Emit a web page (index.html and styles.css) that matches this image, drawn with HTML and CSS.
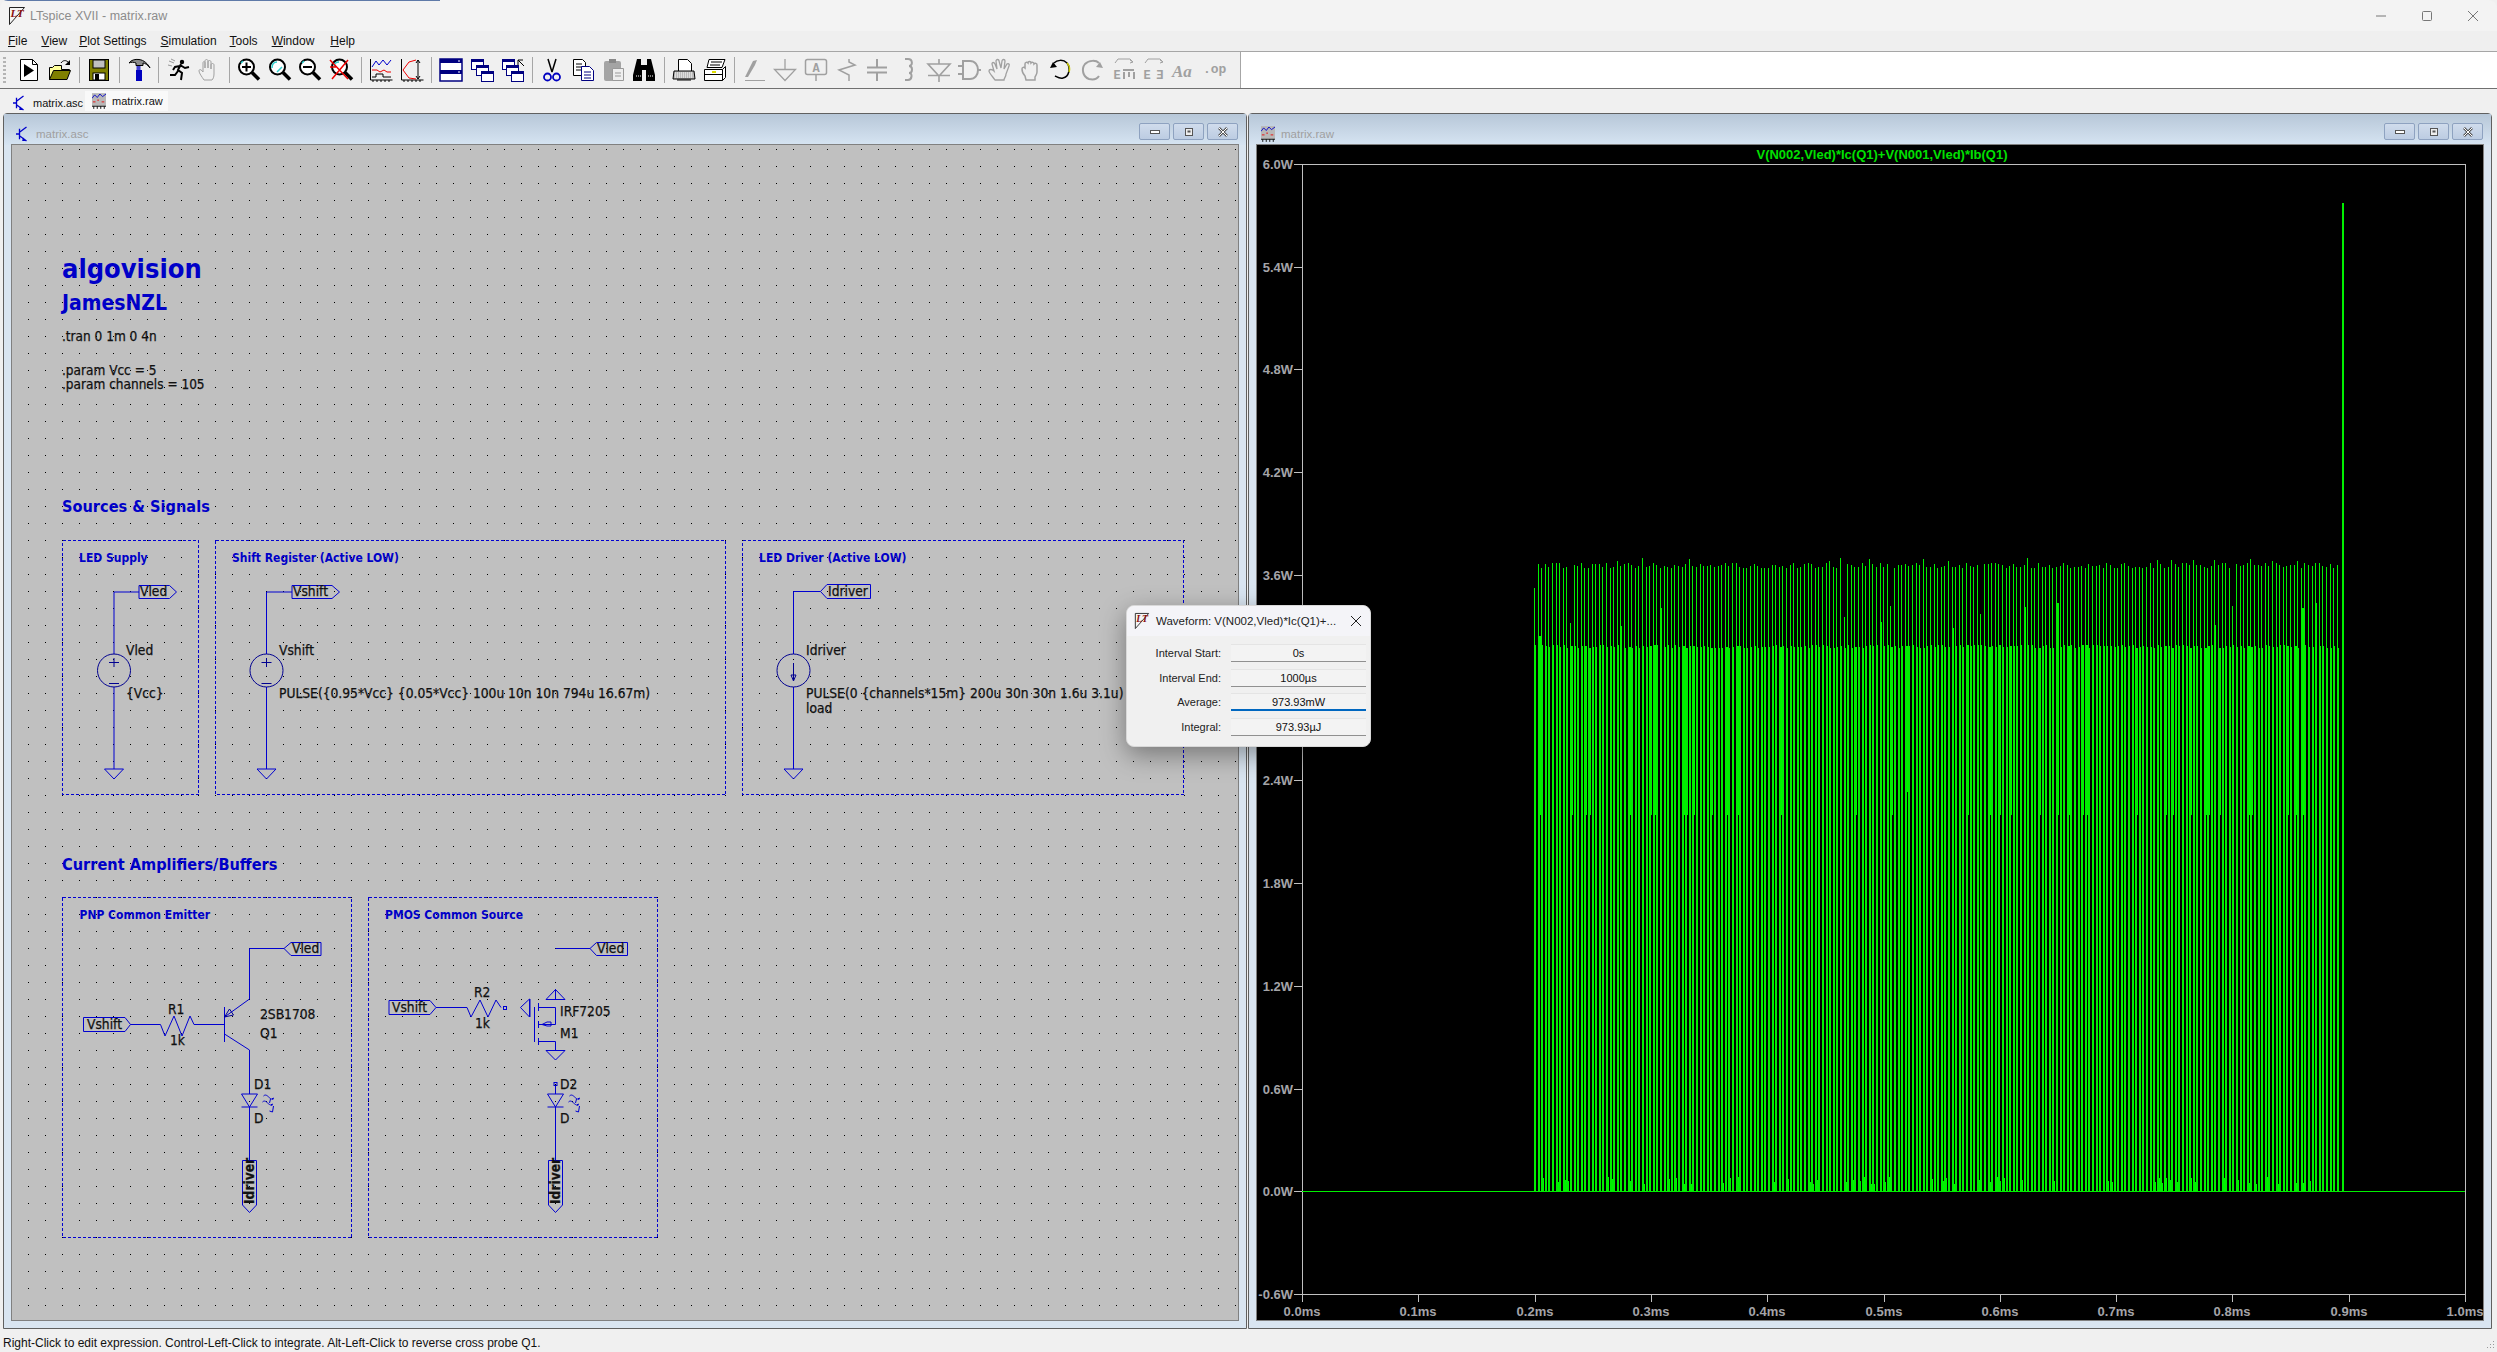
FILE: index.html
```html
<!DOCTYPE html>
<html lang="en">
<head>
    <meta charset="UTF-8">
    <title>LTspice XVII - matrix.raw</title>
    <link rel="stylesheet" href="styles.css">
</head>
<body>
<svg class="defs" width="0" height="0">
    <symbol id="sch-icon" viewBox="0 0 16 18">
        <path d="M4 3v12M0 9h4M4 7l8-6M4 11l8 6" fill="none" stroke="#00c" stroke-width="1.500"/>
        <path d="M8 13l4 4-5 0z" fill="#00c"/>
    </symbol>
    <symbol id="plot-icon" viewBox="0 0 16 18">
        <rect x="0" y="0" width="16" height="15" fill="#b8b8b8"/>
        <path d="M0 6l3-4 3 3 3-4 3 3 4-3" fill="none" stroke="#00c"/>
        <path d="M1 10h3M6 8h2M11 10h3" stroke="#e00"/>
        <path d="M0 15h16M2 15v3M6 15v3M10 15v3M14 15v3" stroke="#000"/>
    </symbol>
</svg>

<div class="app">
    <header class="titlebar">
        <svg class="title-logo" viewBox="0 0 18 20"><path d="M1.500 1.500h15L1.500 18.500z" fill="#f4f4f4" stroke="#222"/><text x="2.500" y="11" class="logo-text">LT</text></svg>
        <span class="title-text">LTspice XVII - matrix.raw</span>
        <div class="caption">
            <svg width="12" height="12"><path d="M1 6h10" stroke="#777"/></svg>
            <svg width="12" height="12"><rect x="1.500" y="1.500" width="9" height="9" rx="1" fill="none" stroke="#777"/></svg>
            <svg width="12" height="12"><path d="M1 1l10 10M11 1L1 11" stroke="#777"/></svg>
        </div>
    </header>

    <nav class="menubar">
        <span><u>F</u>ile</span>
        <span><u>V</u>iew</span>
        <span><u>P</u>lot Settings</span>
        <span><u>S</u>imulation</span>
        <span><u>T</u>ools</span>
        <span><u>W</u>indow</span>
        <span><u>H</u>elp</span>
    </nav>

    <div class="toolrow">
        <div class="toolbar">
            <i class="grip"></i>
            <b class="tool"><svg viewBox="0 0 24 24"><path d="M3.500 1.500h12l5 5v16h-17z" fill="#fff" stroke="#000"/><path d="M15.500 1.500v5h5" fill="none" stroke="#000"/><path d="M7 6l10 6.500L7 19z"/></svg></b>
            <b class="tool"><svg viewBox="0 0 24 24"><path d="M1.500 21.500V9.500h3l2-2h7v4h8l-3 10z" fill="#ffff9c" stroke="#000"/><path d="M1.500 21.500l4-9h17l-3.500 9z" fill="#808000" stroke="#000"/><path d="M13 5c2-3 5-3 7-1" fill="none" stroke="#000"/><path d="M22 2v5h-5" fill="#000"/></svg></b>
            <i class="sep"></i>
            <b class="tool"><svg viewBox="0 0 24 24"><rect x="2.500" y="1.500" width="19" height="21" fill="#808000" stroke="#000"/><rect x="6" y="2" width="12" height="8" fill="#c0c0c0" stroke="#000"/><rect x="6" y="15" width="12" height="7" fill="#fff" stroke="#000"/><rect x="8" y="16" width="4" height="6"/></svg></b>
            <i class="sep"></i>
            <b class="tool"><svg viewBox="0 0 24 24"><path d="M9 7.500h7v-2.500c2 0 5 2 7 5-2-4-6-8-11-8.500C8 1 4 2 2 5c2-1 5-1 7 0z" fill="#8c8c8c" stroke="#000"/><rect x="9.500" y="8" width="4" height="4" fill="#4040d0"/><rect x="9" y="12" width="6" height="11" fill="#0000c0"/></svg></b>
            <i class="sep"></i>
            <b class="tool"><svg viewBox="0 0 24 24"><circle cx="15" cy="4" r="2.200"/><path d="M14 6l-3 6 4 3-1 7M13 8l-5 1-2 3M13 7l5 3 4-1M11 13l-3 4H3" fill="none" stroke="#000" stroke-width="2"/><path d="M2 3l5 2M1 7l4 1M4 1l4 2" stroke="#999"/></svg></b>
            <b class="tool"><svg viewBox="0 0 24 24"><path d="M7 22c-2-3-5-7-5-9s2-2 4 1V5c0-2 2-2 2 0v5-7c0-2 3-2 3 0v7-6c0-2 3-2 3 0v7-4c0-2 3-2 3 0v9c0 3-1 5-2 6z" fill="#f0f0f0" stroke="#a0a0a0"/></svg></b>
            <i class="sep"></i>
            <b class="tool"><svg viewBox="0 0 24 24"><circle cx="9.500" cy="9" r="7.500" fill="#fff" stroke="#000" stroke-width="2"/><path d="M15 14.500l7 7" stroke="#000" stroke-width="3.500"/><path d="M5 9h9M9.500 4.500v9" stroke="#000" stroke-width="2"/><path d="M4 5l2-2" stroke="#2cc" stroke-width="1.500"/></svg></b>
            <b class="tool"><svg viewBox="0 0 24 24"><circle cx="9.500" cy="9" r="7.500" fill="#fff" stroke="#000" stroke-width="2"/><path d="M15 14.500l7 7" stroke="#000" stroke-width="3.500"/><path d="M4 10c0-4 2-6 5-6M9 14l5-5" fill="none" stroke="#3cc" stroke-width="1.500"/></svg></b>
            <b class="tool"><svg viewBox="0 0 24 24"><circle cx="9.500" cy="9" r="7.500" fill="#fff" stroke="#000" stroke-width="2"/><path d="M15 14.500l7 7" stroke="#000" stroke-width="3.500"/><path d="M5 9h9" stroke="#000" stroke-width="2"/><path d="M4 5l2-2" stroke="#2cc" stroke-width="1.500"/></svg></b>
            <b class="tool"><svg viewBox="0 0 24 24"><circle cx="10.500" cy="9" r="7.500" fill="#fff" stroke="#000" stroke-width="2"/><path d="M16 14.500l7 7" stroke="#000" stroke-width="3.500"/><path d="M5 9c0-3 2-5 5-5" fill="none" stroke="#3cc" stroke-width="1.500"/><path d="M1 2l18 19M19 2L3 21M1 9h6" stroke="#e00" stroke-width="1.500"/></svg></b>
            <i class="sep"></i>
            <b class="tool"><svg viewBox="0 0 24 24"><path d="M1.500 1v21h22M4 22v2M8 22v2M12 22v2M16 22v2M20 22v2" fill="none" stroke="#000"/><path d="M3 9l4-6 3 4 4-5 4 5 4-5" fill="none" stroke="#00c"/><path d="M3 12h5l3 2 4-2 3 2h4" fill="none" stroke="#e00"/><path d="M3 19h4v-3h7v3h8" fill="none" stroke="#000"/></svg></b>
            <b class="tool"><svg viewBox="0 0 24 24"><path d="M1.500 1v21h22M4 22v2M8 22v2M12 22v2M16 22v2M20 22v2" fill="none" stroke="#000"/><path d="M3 12l6-8 7-2M3 12l6 8 7 1" fill="none" stroke="#e00"/><path d="M18 2v19M16 5l2-3 2 3M16 18l2 3 2-3" fill="none" stroke="#000"/></svg></b>
            <i class="sep"></i>
            <b class="tool"><svg viewBox="0 0 24 24"><rect x="1" y="1" width="22" height="22" fill="#fff" stroke="#000080" stroke-width="1.500"/><rect x="1" y="1" width="22" height="4" fill="#000080"/><rect x="1" y="12" width="22" height="4" fill="#000080"/><path d="M19 3h2M19 14h2" stroke="#fff"/></svg></b>
            <b class="tool"><svg viewBox="0 0 24 24"><rect x="1.500" y="1.500" width="12" height="10" fill="#fff" stroke="#000080"/><rect x="1" y="1" width="13" height="3" fill="#000080"/><rect x="6.500" y="7.500" width="12" height="10" fill="#fff" stroke="#000080"/><rect x="6" y="7" width="13" height="3" fill="#000080"/><rect x="11.500" y="13.500" width="12" height="10" fill="#fff" stroke="#000080"/><rect x="11" y="13" width="13" height="3" fill="#000080"/></svg></b>
            <b class="tool"><svg viewBox="0 0 24 24"><rect x="1.500" y="1.500" width="12" height="10" fill="#fff" stroke="#000080"/><rect x="1" y="1" width="13" height="3" fill="#000080"/><rect x="5.500" y="7.500" width="12" height="10" fill="#fff" stroke="#000080"/><rect x="5" y="7" width="13" height="3" fill="#000080"/><rect x="10.500" y="13.500" width="12" height="10" fill="#fff" stroke="#000080"/><rect x="10" y="13" width="13" height="3" fill="#000080"/><path d="M17 2h5M17 2v5M23 8l-6-6" stroke="#000" fill="none"/></svg></b>
            <i class="sep"></i>
            <b class="tool"><svg viewBox="0 0 24 24"><path d="M8 1l4 13M16 1l-4 13" stroke="#000" stroke-width="1.500"/><circle cx="7.500" cy="19" r="3.500" fill="none" stroke="#0000c0" stroke-width="1.800"/><circle cx="16.500" cy="19" r="3.500" fill="none" stroke="#0000c0" stroke-width="1.800"/></svg></b>
            <b class="tool"><svg viewBox="0 0 24 24"><path d="M2.500 1.500h9l3 3v13h-12z" fill="#fff" stroke="#000"/><path d="M5 6h6M5 9h7M5 12h7" stroke="#000"/><path d="M10.500 8.500h8l4 4v10h-12z" fill="#fff" stroke="#000080"/><path d="M13 14h7M13 17h7M13 20h7" stroke="#000080"/></svg></b>
            <b class="tool"><svg viewBox="0 0 24 24"><rect x="2" y="3" width="17" height="20" rx="2" fill="#a4a4a4"/><rect x="7" y="1" width="7" height="4" fill="#888"/><path d="M10.500 10.500h11v12h-11z" fill="#eee" stroke="#999"/><path d="M13 15h6M13 18h6" stroke="#999"/></svg></b>
            <b class="tool"><svg viewBox="0 0 24 24"><path d="M5 1h4v6h6V1h4l4 16v6h-9V12h-4v11H1v-6z"/><path d="M4 18h5M16 18h5" stroke="#fff" stroke-dasharray="1 1"/></svg></b>
            <i class="sep"></i>
            <b class="tool"><svg viewBox="0 0 24 24"><path d="M6.500 1.500h9l4 4v8h-13z" fill="#fff" stroke="#000"/><path d="M2 13h20l1 8H1z" fill="#bbb" stroke="#000"/><path d="M3 15h18M3 17h18M3 19h18" stroke="#fff" stroke-dasharray="1 1"/><path d="M5 22h14" stroke="#000"/></svg></b>
            <b class="tool"><svg viewBox="0 0 24 24"><path d="M6 1.500h16l-3 8H4z" fill="#fff" stroke="#000"/><path d="M8 4h11M7 7h10" stroke="#000"/><path d="M1.500 11.500h18l3-3v11l-3 3h-18z" fill="#fff" stroke="#000"/><path d="M1.500 16.500h18M19.500 11.500v11" stroke="#000"/><path d="M9 14h4" stroke="#dd0" stroke-width="2"/></svg></b>
            <i class="sep"></i>
            <b class="tool off"><svg viewBox="0 0 24 24"><path d="M3 19L11 3l4-1-2 5-7 12z" fill="#a0a0a0"/><path d="M3 22.500h20" stroke="#a0a0a0"/></svg></b>
            <b class="tool off"><svg viewBox="0 0 24 24"><path d="M12 1v10M1.500 11.500h21L12 22.500z" fill="none" stroke="#a0a0a0" stroke-width="1.300"/></svg></b>
            <b class="tool off"><svg viewBox="0 0 24 24"><rect x="1.500" y="1.500" width="21" height="15" rx="2" fill="none" stroke="#a0a0a0" stroke-width="1.500"/><path d="M12 17v6" stroke="#a0a0a0" stroke-width="1.500"/><text x="12" y="13.500" class="ico-text">A</text></svg></b>
            <b class="tool off"><svg viewBox="0 0 24 24"><path d="M15 1v3l6 3-16 5 10 5v6" fill="none" stroke="#a0a0a0" stroke-width="1.500"/></svg></b>
            <b class="tool off"><svg viewBox="0 0 24 24"><path d="M12 1v8M2 9.500h20M2 14.500h20M12 15v8" fill="none" stroke="#a0a0a0" stroke-width="2"/></svg></b>
            <b class="tool off"><svg viewBox="0 0 24 24"><path d="M9 1h3c5 0 5 7 1 7 4 0 4 7 0 7 4 0 3 7-1 7H9" fill="none" stroke="#a0a0a0" stroke-width="2"/></svg></b>
            <b class="tool off"><svg viewBox="0 0 24 24"><path d="M12 1v5M12 18v6M1 6h22L12 18 1 6zM1 17.500h22" fill="none" stroke="#a0a0a0" stroke-width="1.600"/></svg></b>
            <b class="tool off"><svg viewBox="0 0 24 24"><path d="M6 3h7c5 0 8 4 8 9s-3 9-8 9H6zM1 8h5M1 16h5M21 12h3" fill="none" stroke="#a0a0a0" stroke-width="2"/></svg></b>
            <b class="tool off"><svg viewBox="0 0 24 24"><path d="M7 22c-2-3-6-7-6-9s3-2 5 0l-2-7c0-2 2-2 3 0l2 5-1-8c0-2 3-2 3 0l2 7 1-7c0-2 3-2 3 0l-1 8 3-5c1-1 3 0 2 2l-3 8c0 3-2 4-2 6z" fill="none" stroke="#a0a0a0" stroke-width="1.300"/></svg></b>
            <b class="tool off"><svg viewBox="0 0 24 24"><path d="M7 22l-1-4c-2-2-3-5-3-7s2-2 3-1V6c0-2 2-2 3-1 0-2 3-2 3 0 1-1 3-1 3 1 1-1 3-1 3 1v7c0 2-1 3-2 5v3z" fill="none" stroke="#a0a0a0" stroke-width="1.500"/></svg></b>
            <b class="tool"><svg viewBox="0 0 24 24"><path d="M5 5c3-3 9-4 13 0 4 5 2 14-4 15-3 1-6-1-8-2" fill="none" stroke="#000" stroke-width="1.500"/><path d="M18 5c3 3 3 7 2 9" fill="none" stroke="#cc0" stroke-width="1.500"/><path d="M1 10l7-1-4-5z"/></svg></b>
            <b class="tool off"><svg viewBox="0 0 24 24"><path d="M19 5C16 2 9 2 5 6c-4 5-2 13 4 15 4 1 8 0 10-3" fill="none" stroke="#a0a0a0" stroke-width="2"/><path d="M23 10l-7-1 4-5z" fill="#a0a0a0"/></svg></b>
            <b class="tool off"><svg viewBox="0 0 24 24"><path d="M4 5l3-4h12l3 3M19 2l3 2-3 1" fill="none" stroke="#a0a0a0"/><text x="6" y="21" class="ico-text">E</text><path d="M12 12h11M13 14v7M18 14v5M23 14v7" stroke="#a0a0a0" stroke-width="2" fill="none"/></svg></b>
            <b class="tool off"><svg viewBox="0 0 24 24"><path d="M4 5l3-4h12l3 3M19 2l3 2-3 1" fill="none" stroke="#a0a0a0"/><text x="6" y="21" class="ico-text">E</text><text x="19" y="21" class="ico-text flip">E</text></svg></b>
            <b class="tool off"><svg viewBox="0 0 24 24"><text x="0" y="19" class="ico-aa">Aa</text></svg></b>
            <b class="tool off"><svg viewBox="0 0 24 24"><text x="0" y="15" class="ico-op">.op</text></svg></b>
        </div>
        <div class="toolrest"></div>
    </div>

    <div class="tabs">
        <span class="tab"><svg class="tab-ico"><use href="#sch-icon"/></svg>matrix.asc</span>
        <span class="tab active"><svg class="tab-ico"><use href="#plot-icon"/></svg>matrix.raw</span>
    </div>

    <main class="mdi">
        <section class="window">
            <div class="win-title">
                <svg class="win-ico"><use href="#sch-icon"/></svg>
                <span class="win-name">matrix.asc</span>
                <div class="win-btns">
                    <span class="win-btn"><svg width="12" height="8"><rect x="1.500" y="2.500" width="9" height="3" fill="#fff" stroke="#555"/></svg></span>
                    <span class="win-btn"><svg width="10" height="10"><rect x="1.500" y="1.500" width="7" height="7" fill="#eee" stroke="#555"/><rect x="3.500" y="3.500" width="3" height="2" fill="#555"/></svg></span>
                    <span class="win-btn"><svg width="12" height="10"><path d="M2 1l8 8M10 1L2 9" stroke="#555" stroke-width="2.500"/><path d="M2 1l8 8M10 1L2 9" stroke="#fff"/></svg></span>
                </div>
            </div>
            <div class="canvas">
                <svg class="schematic" viewBox="12 145 1226 1175" width="1226" height="1175">
                    <defs>
                        <pattern id="grid" patternUnits="userSpaceOnUse" x="11" y="13" width="17" height="17">
                            <rect width="1" height="1" fill="#000"/>
                        </pattern>
                        <g id="gnd"><path d="M-9.500 0h19L0 10z"/></g>
                        <g id="led">
                            <path d="M-8 0h16L0 13zM-8 13H8"/>
                            <path d="M14 2c3-3 5 2 8 3l2-1-1 2M13 8c3-3 5 2 8 3l2-1-1 2M21 5l-1 4M24 12l-1 6-3-1"/>
                        </g>
                        <g id="idriver-flag">
                            <path d="M-7 0v44.500L0 52 7 44.500V0z"/>
                        </g>
                    </defs>
                    <rect x="12" y="145" width="1226" height="1175" fill="url(#grid)" class="dots"/>

                    <text x="62" y="278" class="h-big">algovision</text>
                    <text x="62" y="310" class="h-mid">JamesNZL</text>
                    <text x="62" y="341" class="note">.tran 0 1m 0 4n</text>
                    <text x="62" y="375" class="note">.param Vcc = 5</text>
                    <text x="62" y="389" class="note">.param channels = 105</text>
                    <text x="62" y="512" class="h-sec">Sources &amp; Signals</text>
                    <text x="62" y="870" class="h-sec">Current Amplifiers/Buffers</text>

                    <g class="dash">
                        <rect x="62.500" y="540.500" width="136" height="254"/>
                        <rect x="215.500" y="540.500" width="510" height="254"/>
                        <rect x="742.500" y="540.500" width="441" height="254"/>
                        <rect x="62.500" y="897.500" width="289" height="340"/>
                        <rect x="368.500" y="897.500" width="289" height="340"/>
                    </g>
                    <text x="79" y="562" class="h-box">LED Supply</text>
                    <text x="232" y="562" class="h-box">Shift Register (Active LOW)</text>
                    <text x="759" y="562" class="h-box">LED Driver (Active LOW)</text>
                    <text x="79.500" y="919" class="h-box">PNP Common Emitter</text>
                    <text x="385" y="919" class="h-box">PMOS Common Source</text>

                    <g class="wire">
                        <!-- LED supply -->
                        <path d="M139 592H114V654M114 687V769"/>
                        <path d="M139 585.500H169.500L176.500 592 169.500 598.500H139z"/>
                        <circle cx="114" cy="670.500" r="16.500" class="sym"/>
                        <path d="M109 662.500h10M114 658v9M109 683.500h10" class="sym"/>
                        <use href="#gnd" x="114" y="769"/>
                        <!-- Shift register -->
                        <path d="M292 592H266.500V654M266.500 687V769"/>
                        <path d="M292 585.500H332L339.500 592 332 598.500H292z"/>
                        <circle cx="266.500" cy="670.500" r="16.500" class="sym"/>
                        <path d="M261.500 662.500h10M266.500 658v9M261.500 683.500h10" class="sym"/>
                        <use href="#gnd" x="266.500" y="769"/>
                        <!-- LED driver -->
                        <path d="M820.500 591.500H793.500V654M793.500 687V769"/>
                        <path d="M820.500 591.500L827 584.500H870.500V598.500H827z"/>
                        <circle cx="793.500" cy="670.500" r="16.500" class="sym"/>
                        <path d="M793.500 663v17M791 675l2.500 6 2.500-6z" class="sym"/>
                        <use href="#gnd" x="793.500" y="769"/>
                        <!-- PNP stage -->
                        <path d="M249.500 999V948.500H284M284 948.500L291 942.500H321V955.500H291z"/>
                        <path d="M83.500 1017.500H125L130.500 1024.500 125 1031.500H83.500zM130.500 1024.500H160.500L165 1036 174 1016 182 1036 190 1016 194 1024.500H224"/>
                        <path d="M224.500 1007V1042M224.500 1017L249.500 999M224.500 1034L249.500 1050V1094"/>
                        <path d="M224.500 1017l5-8 4 6z" class="sym"/>
                        <use href="#led" x="249.500" y="1094"/>
                        <path d="M249.500 1107V1160.500"/>
                        <use href="#idriver-flag" x="249.500" y="1160.500"/>
                        <!-- PMOS stage -->
                        <path d="M389 1000.500H430L436 1007.500 430 1014.500H389zM436 1007.500H467L471 1017 480 1000 488 1017 496 1000 501 1007.500"/>
                        <rect x="503.500" y="1006.500" width="3" height="3"/>
                        <path d="M520.500 1007.500l9-8.500v18zM530 999V1017M534.500 1007V1042M538.500 1003V1011M538.500 1021V1028M538.500 1038V1045M538.500 1007.500H555.500V1024.500H538.500M538.500 1041.500H555.500V1050M555.500 989V999"/>
                        <path d="M546 999.500h19L555.500 989.500zM546 1050.500h19L555.500 1060z"/>
                        <path d="M542 1024.500l5-2.500h4v4h-4z"/>
                        <path d="M555.500 948.500H590L596.500 942.500H627.500V955.500H596.500L590 948.500"/>
                        <rect x="554" y="1082.500" width="3" height="3"/>
                        <path d="M555.500 1086V1094"/>
                        <use href="#led" x="555.500" y="1094"/>
                        <path d="M555.500 1107V1160.500"/>
                        <use href="#idriver-flag" x="555.500" y="1160.500"/>
                    </g>

                    <g class="lbl">
                        <text x="140" y="596">Vled</text>
                        <text x="293" y="596">Vshift</text>
                        <text x="828" y="596">Idriver</text>
                        <text x="126" y="655">Vled</text>
                        <text x="126" y="698">{Vcc}</text>
                        <text x="279" y="655">Vshift</text>
                        <text x="279" y="698">PULSE({0.95*Vcc} {0.05*Vcc} 100u 10n 10n 794u 16.67m)</text>
                        <text x="806" y="655">Idriver</text>
                        <text x="806" y="698">PULSE(0 {channels*15m} 200u 30n 30n 1.6u 3.1u)</text>
                        <text x="806" y="713">load</text>
                        <text x="292" y="953">Vled</text>
                        <text x="87" y="1029">Vshift</text>
                        <text x="168" y="1014">R1</text>
                        <text x="170" y="1045">1k</text>
                        <text x="260" y="1019">2SB1708</text>
                        <text x="260" y="1038">Q1</text>
                        <text x="254" y="1089">D1</text>
                        <text x="254" y="1123">D</text>
                        <text x="392" y="1012">Vshift</text>
                        <text x="474" y="997">R2</text>
                        <text x="475" y="1028">1k</text>
                        <text x="560" y="1016">IRF7205</text>
                        <text x="560" y="1038">M1</text>
                        <text x="597" y="953">Vled</text>
                        <text x="560" y="1089">D2</text>
                        <text x="560" y="1123">D</text>
                        <text transform="translate(254 1204) rotate(-90)" class="lbl-bold">Idriver</text>
                        <text transform="translate(560 1204) rotate(-90)" class="lbl-bold">Idriver</text>
                    </g>
                </svg>
            </div>
        </section>

        <section class="window">
            <div class="win-title">
                <svg class="win-ico"><use href="#plot-icon"/></svg>
                <span class="win-name">matrix.raw</span>
                <div class="win-btns">
                    <span class="win-btn"><svg width="12" height="8"><rect x="1.500" y="2.500" width="9" height="3" fill="#fff" stroke="#555"/></svg></span>
                    <span class="win-btn"><svg width="10" height="10"><rect x="1.500" y="1.500" width="7" height="7" fill="#eee" stroke="#555"/><rect x="3.500" y="3.500" width="3" height="2" fill="#555"/></svg></span>
                    <span class="win-btn"><svg width="12" height="10"><path d="M2 1l8 8M10 1L2 9" stroke="#555" stroke-width="2.500"/><path d="M2 1l8 8M10 1L2 9" stroke="#fff"/></svg></span>
                </div>
            </div>
            <div class="canvas plot">
                <svg id="plot" viewBox="1257 145 1226 1175" width="1226" height="1175">
                    <text x="1882" y="159" class="trace-name">V(N002,Vled)*Ic(Q1)+V(N001,Vled)*Ib(Q1)</text>
                    <g id="axes"></g>
                    <g id="trace"></g>
                </svg>
            </div>
        </section>

        <aside class="dialog">
            <div class="dlg-title">
                <svg class="dlg-logo" viewBox="0 0 18 20"><path d="M1.500 1.500h15L1.500 18.500z" fill="#f4f4f4" stroke="#222"/><text x="2.500" y="11" class="logo-text">LT</text></svg>
                <span>Waveform: V(N002,Vled)*Ic(Q1)+...</span>
                <svg class="dlg-close" width="12" height="12"><path d="M1 1l10 10M11 1L1 11" stroke="#222"/></svg>
            </div>
            <div class="dlg-row"><label>Interval Start:</label><output>0s</output></div>
            <div class="dlg-row"><label>Interval End:</label><output>1000µs</output></div>
            <div class="dlg-row"><label>Average:</label><output class="focus">973.93mW</output></div>
            <div class="dlg-row"><label>Integral:</label><output>973.93µJ</output></div>
        </aside>
    </main>

    <footer class="status">
        <span>Right-Click to edit expression. Control-Left-Click to integrate. Alt-Left-Click to reverse cross probe Q1.</span>
        <svg class="size-grip" width="12" height="12"><path d="M10 2h1v1h-1zM7 5h1v1H7zM10 5h1v1h-1zM4 8h1v1H4zM7 8h1v1H7zM10 8h1v1h-1z" fill="#999"/></svg>
    </footer>
</div>
<script src="plot.js"></script>
</body>
</html>
```

FILE: styles.css
```css
* { box-sizing: border-box; }
html, body { margin: 0; height: 100%; overflow: hidden; }
body {
    font-family: "Liberation Sans", Arial, sans-serif;
    font-size: 12px;
    color: #111;
    background: #f0f0f0;
}
.defs { position: absolute; }
.app { display: flex; flex-direction: column; height: 100vh; }

/* window frame */
.titlebar {
    height: 31px;
    display: flex;
    align-items: center;
    padding-left: 8px;
    background: linear-gradient(#5f7aa8, #5f7aa8) 0 0 / 440px 1px no-repeat, #f3f3f3;
    border-radius: 8px 8px 0 0;
}
.title-logo { width: 18px; height: 20px; }
.title-text { margin-left: 4px; color: #8c8c8c; font-size: 12.5px; }
.caption { margin-left: auto; display: flex; gap: 34px; padding-right: 18px; }
.logo-text { font: italic bold 11px "Liberation Serif", serif; fill: #8a1010; }

.menubar {
    height: 21px;
    display: flex;
    align-items: center;
    padding-left: 8px;
    gap: 9px;
    background: #efefef;
    border-bottom: 1px solid #a6a6a6;
    font-size: 12px;
}
.menubar span:nth-child(2) { margin-left: 5px; }
.menubar span:nth-child(3) { margin-left: 3px; }
.menubar span:nth-child(4) { margin-left: 5px; }
.menubar span:nth-child(5) { margin-left: 4px; }
.menubar span:nth-child(6) { margin-left: 5px; }
.menubar span:nth-child(7) { margin-left: 7px; }

/* toolbar */
.toolrow { height: 37px; display: flex; border-bottom: 1px solid #707070; }
.toolbar {
    width: 1241px;
    display: flex;
    align-items: center;
    padding-left: 3px;
    background: #f0f0f0;
    border-right: 1px solid #a6a6a6;
}
.toolrest { flex: 1; background: #fff; }
.grip {
    width: 3px;
    height: 26px;
    margin-right: 7.650px;
    background: repeating-linear-gradient(#b4b4b4 0 2px, transparent 2px 4px);
}
.tool { width: 30.700px; height: 36px; display: flex; align-items: center; justify-content: center; }
.tool svg { width: 24px; height: 24px; overflow: visible; }
.sep { width: 1px; height: 26px; margin: 0 4px; background: #a6a6a6; }
.ico-text { font: bold 12px "Liberation Mono", monospace; fill: #a0a0a0; text-anchor: middle; }
.ico-text.flip { transform-box: fill-box; transform-origin: center; transform: scaleX(-1); }
.ico-aa { font: italic bold 17px "Liberation Serif", serif; fill: #a0a0a0; }
.ico-op { font: bold 13px "Liberation Mono", monospace; fill: #a0a0a0; }

/* tabs */
.tabs { height: 24px; display: flex; align-items: flex-start; padding: 2px 0 0 5px; background: #f0f0f0; }
.tab {
    height: 20px;
    width: 80px;
    display: flex;
    align-items: center;
    gap: 6px;
    padding: 3px 0 0 8px;
    font-size: 11px;
}
.tab.active { background: #f9f9f9; padding: 0 0 0 7px; width: 83px; }
.tab-ico { width: 14px; height: 16px; flex: none; }

/* child windows */
.mdi { flex: 1; display: flex; gap: 1px; padding: 0 5px 1px 3px; position: relative; min-height: 0; }
.window {
    width: 1244px;
    display: flex;
    flex-direction: column;
    padding: 0 8px 8px;
    background: #d9e5f1;
    border: 1px solid #606060;
    border-radius: 4px 4px 0 0;
}
.win-title {
    height: 31px;
    margin: 0 -8px;
    padding: 0 8px 0 12px;
    display: flex;
    align-items: center;
    background: linear-gradient(#b7c7d8, #d6e4f2);
}
.win-ico { width: 14px; height: 16px; margin-top: 8px; }
.win-name { margin: 8px 0 0 6px; color: #a0a0a0; font-size: 11.500px; }
.win-btns { margin-left: auto; display: flex; gap: 3px; margin-top: 4px; }
.win-btn {
    width: 31px;
    height: 17px;
    display: flex;
    align-items: center;
    justify-content: center;
    border: 1px solid #8ea2c0;
    border-radius: 2px;
    background: linear-gradient(#d0dcec, #bccce2);
}
.canvas { width: 1226px; height: 1175px; background: #c0c0c0; outline: 1px solid #808080; }
.canvas svg { display: block; }
.plot { background: #000; }

/* schematic */
.dots { shape-rendering: crispEdges; }
.dash rect { fill: none; stroke: #0000d0; stroke-dasharray: 3 2; shape-rendering: crispEdges; }
.wire path, .wire rect, .wire circle, .wire use { fill: none; stroke: #0000d0; stroke-width: 1; }
.wire .sym { stroke: #000090; }
.h-big, .h-mid, .h-sec, .h-box, .note, .lbl text {
    font-family: "DejaVu Sans Condensed", "DejaVu Sans", sans-serif;
    font-stretch: condensed;
}
.h-big { font-size: 27px; font-weight: bold; fill: #0000c8; }
.h-mid { font-size: 21px; font-weight: bold; fill: #0000c8; }
.h-sec { font-size: 16.200px; font-weight: bold; fill: #0000c8; }
.h-box { font-size: 12px; font-weight: bold; fill: #0000c8; }
.note, .lbl text { font-size: 13.500px; fill: #111; stroke: #111; stroke-width: .25px; }
.lbl text { font-size: 13.700px; }
.lbl .lbl-bold { font-weight: bold; }

/* plot */
.trace-name { font: bold 13px "Liberation Sans", sans-serif; fill: #00e000; text-anchor: middle; }
.axis-line { stroke: #c0c0c0; fill: none; shape-rendering: crispEdges; }
.axis-y, .axis-x { font: bold 13px "Liberation Sans", sans-serif; fill: #a4a4a8; }
.axis-y { text-anchor: end; }
.axis-x { text-anchor: middle; }
.trace-bar { fill: #00f000; shape-rendering: crispEdges; }

/* measurement dialog */
.dialog {
    position: absolute;
    left: 1126px;
    top: 492px;
    width: 245px;
    height: 142px;
    background: #f0f0f0;
    border: 1px solid #d8d8d8;
    border-radius: 8px;
    box-shadow: 0 8px 26px rgba(0, 0, 0, .38);
    overflow: hidden;
    font-size: 11px;
}
.dlg-title {
    height: 30px;
    display: flex;
    align-items: center;
    padding-left: 7px;
    background: #f4f4f8;
    font-size: 11.5px;
    color: #222;
    margin-bottom: 8px;
}
.dlg-logo { width: 16px; height: 18px; margin-right: 6px; flex: none; }
.dlg-close { margin-left: auto; margin-right: 8px; }
.dlg-row { display: flex; align-items: center; height: 18px; margin-bottom: 6.500px; }
.dlg-row label { width: 94px; text-align: right; color: #222; }
.dlg-row output {
    width: 135px;
    height: 18px;
    margin-left: 10px;
    line-height: 17px;
    text-align: center;
    background: #f3f3f3;
    border-top: 1px solid #e4e4e4;
    border-bottom: 1px solid #909090;
}
.dlg-row output.focus { border-bottom: 2px solid #0067c0; }

/* status bar */
.status {
    height: 22px;
    display: flex;
    padding: 6px 0 0 3px;
    background: #f0f0f0;
    font-size: 12px;
    line-height: 14px;
    white-space: nowrap;
}
.size-grip { margin: 3px 2px 0 auto; }
```

FILE: plot.js
```js
// draws the axes and the waveform of the plot pane
var NS = 'http://www.w3.org/2000/svg';
var axes = document.getElementById('axes');
var trace = document.getElementById('trace');

var LEFT = 1302, RIGHT = 2465, TOP = 164, BOTTOM = 1294, ZERO = 1191;

function el(parent, tag, attrs, txt) {
    var e = document.createElementNS(NS, tag);
    for (var k in attrs) e.setAttribute(k, attrs[k]);
    if (txt) e.textContent = txt;
    parent.appendChild(e);
    return e;
}

function bar(x, y0, y1, w) {
    el(trace, 'rect', { x: x, y: y0, width: w, height: y1 - y0, 'class': 'trace-bar' });
}

// frame
el(axes, 'rect', { x: LEFT + .5, y: TOP + .5, width: RIGHT - LEFT, height: BOTTOM - TOP, 'class': 'axis-line' });

// y ticks, 6.0W down to -0.6W
for (var i = 0; i <= 11; i++) {
    var y = Math.round(TOP + i * (BOTTOM - TOP) / 11);
    var v = (6 - i * .6).toFixed(1);
    el(axes, 'path', { d: 'M' + (LEFT - 8) + ' ' + (y + .5) + 'H' + LEFT, 'class': 'axis-line' });
    el(axes, 'text', { x: LEFT - 9, y: y + 5, 'class': 'axis-y' }, v + 'W');
}

// x ticks, 0.0ms to 1.0ms
for (var j = 0; j <= 10; j++) {
    var x = Math.round(LEFT + j * (RIGHT - LEFT) / 10);
    el(axes, 'path', { d: 'M' + (x + .5) + ' ' + BOTTOM + 'V' + (BOTTOM + 8), 'class': 'axis-line' });
    el(axes, 'text', { x: x, y: BOTTOM + 22, 'class': 'axis-x' }, (j / 10).toFixed(1) + 'ms');
}

// small fixed-seed generator so every render gives the same noise
var seed = 20417;
function rnd() {
    seed = (seed * 16807) % 2147483647;
    return seed / 2147483647;
}

// baseline
bar(LEFT, ZERO, ZERO + 1, RIGHT - LEFT);

// 3.1us pulse train from 0.2ms to about 0.895ms
var start = 1534, period = 3.6, count = 224;
for (var p = 0; p < count; p++) {
    var px = Math.round(start + p * period);
    var r = rnd();
    var peak = 565 + Math.floor(rnd() * 6) - 2;
    if (r > .97) peak = 590 + Math.floor(rnd() * 40);
    else if (r > .9) peak = 558 + Math.floor(rnd() * 4);
    if (p === 0) peak = 588;

    var mid = 645 + Math.floor(rnd() * 4);
    var r2 = rnd();
    if (r2 > .95) mid = 600 + Math.floor(rnd() * 40);

    var low = 815;
    var r3 = rnd();
    if (r3 > .9) low = 790 + Math.floor(rnd() * 20);

    bar(px, peak, mid, 1);
    bar(px, mid, low, rnd() > .82 ? 3 : 2);
    bar(px, low, ZERO, 2);

    // some gaps close before they reach the baseline
    if (rnd() > .75) bar(px + 2, 1177 + Math.floor(rnd() * 8), ZERO, 1);
}

// spike at the end of the train
bar(2342, 203, ZERO, 2);
```
